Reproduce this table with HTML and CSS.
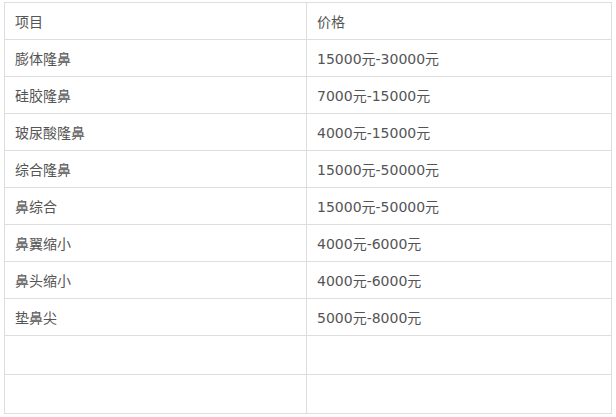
FILE: index.html
```html
<!DOCTYPE html>
<html lang="zh-CN">
<head>
<meta charset="utf-8">
<title>价格表</title>
<link rel="stylesheet" href="styles.css">
</head>
<body>
<div class="price-table">
  <div class="cell">项目</div><div class="cell">价格</div>
  <div class="cell">膨体隆鼻</div><div class="cell">15000元-30000元</div>
  <div class="cell">硅胶隆鼻</div><div class="cell">7000元-15000元</div>
  <div class="cell">玻尿酸隆鼻</div><div class="cell">4000元-15000元</div>
  <div class="cell">综合隆鼻</div><div class="cell">15000元-50000元</div>
  <div class="cell">鼻综合</div><div class="cell">15000元-50000元</div>
  <div class="cell">鼻翼缩小</div><div class="cell">4000元-6000元</div>
  <div class="cell">鼻头缩小</div><div class="cell">4000元-6000元</div>
  <div class="cell">垫鼻尖</div><div class="cell">5000元-8000元</div>
  <div class="cell empty"></div><div class="cell empty"></div>
  <div class="cell empty"></div><div class="cell empty"></div>
</div>
</body>
</html>
```

FILE: styles.css
```css
html, body {
  background: #ffffff;
}
body {
  margin: 2px 0 0 4px;
  font-family: "DejaVu Sans", "Noto Sans CJK SC", sans-serif;
  font-size: 14px;
  color: #555555;
}
.price-table {
  display: grid;
  grid-template-columns: 302px 305px;
  width: 608px;
  box-sizing: border-box;
  border-top: 1px solid #dddddd;
  border-left: 1px solid #dddddd;
}
.cell {
  box-sizing: border-box;
  height: 37px;
  padding: 0 10px;
  display: flex;
  align-items: center;
  border-right: 1px solid #dddddd;
  border-bottom: 1px solid #dddddd;
  white-space: nowrap;
}
.cell.empty {
  height: 39px;
}
```
